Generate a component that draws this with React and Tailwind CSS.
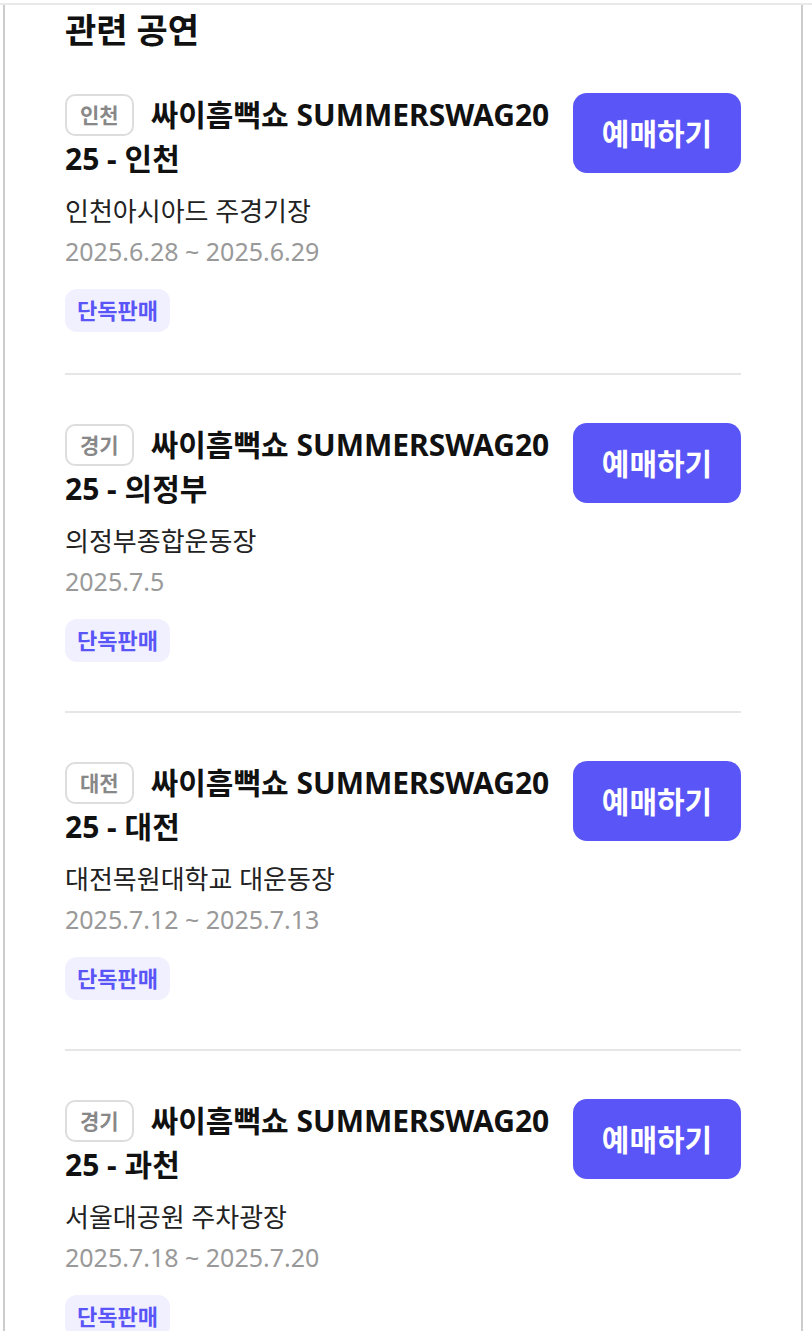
import React from "react";

const shows = [
  { region: "인천", city: "인천", venue: "인천아시아드 주경기장", date: "2025.6.28 ~ 2025.6.29" },
  { region: "경기", city: "의정부", venue: "의정부종합운동장", date: "2025.7.5" },
  { region: "대전", city: "대전", venue: "대전목원대학교 대운동장", date: "2025.7.12 ~ 2025.7.13" },
  { region: "경기", city: "과천", venue: "서울대공원 주차광장", date: "2025.7.18 ~ 2025.7.20" },
];

const ShowItem = ({ show, first, last }) => (
  <div
    className={`flex items-start gap-[22px] ${first ? "pt-[43px] pb-[41px]" : "pt-[48px] pb-[49px]"} ${
      last ? "" : "border-b-2 border-[#e6e6e6]"
    }`}
  >
    <div className="flex-1 min-w-0">
      <div className="text-[30px] leading-[44px] font-bold text-[#111] break-all">
        <span className="inline-flex items-center justify-center align-top mt-px mr-[17px] h-[42px] px-[13px] rounded-[10px] border-2 border-[#dddddd] text-[21px] font-bold text-[#888]">
          {show.region}
        </span>
        싸이흠뻑쇼 SUMMERSWAG2025 - {show.city}
      </div>
      <div className="mt-[10px] text-[26px] leading-[40px] text-[#222]">{show.venue}</div>
      <div className="text-[25px] leading-[40px] text-[#999]">{show.date}</div>
      <div className="mt-[18px]">
        <span className="inline-flex items-center h-[43px] px-[12px] rounded-[12px] bg-[#f1f0ff] text-[22px] font-bold text-[#5a55f7]">
          단독판매
        </span>
      </div>
    </div>
    <button className="shrink-0 w-[168px] h-[80px] rounded-[14px] bg-[#5a55f7] text-white text-[30px] font-bold">
      예매하기
    </button>
  </div>
);

export default function App() {
  return (
    <div
      className="min-h-screen bg-white pt-[3px]"
      style={{ fontFamily: '"Noto Sans", "Noto Sans CJK KR", sans-serif' }}
    >
      <div className="border-t-2 border-[#e9e9e9]">
        <div className="ml-[3px] w-[800px] min-h-[1330px] border-x-2 border-[#cccccc] px-[60px] pt-[5px]">
          <h2 className="text-[34px] leading-[40px] font-bold text-[#111]">관련 공연</h2>
          {shows.map((show, i) => (
            <ShowItem key={i} show={show} first={i === 0} last={i === shows.length - 1} />
          ))}
        </div>
      </div>
    </div>
  );
}
